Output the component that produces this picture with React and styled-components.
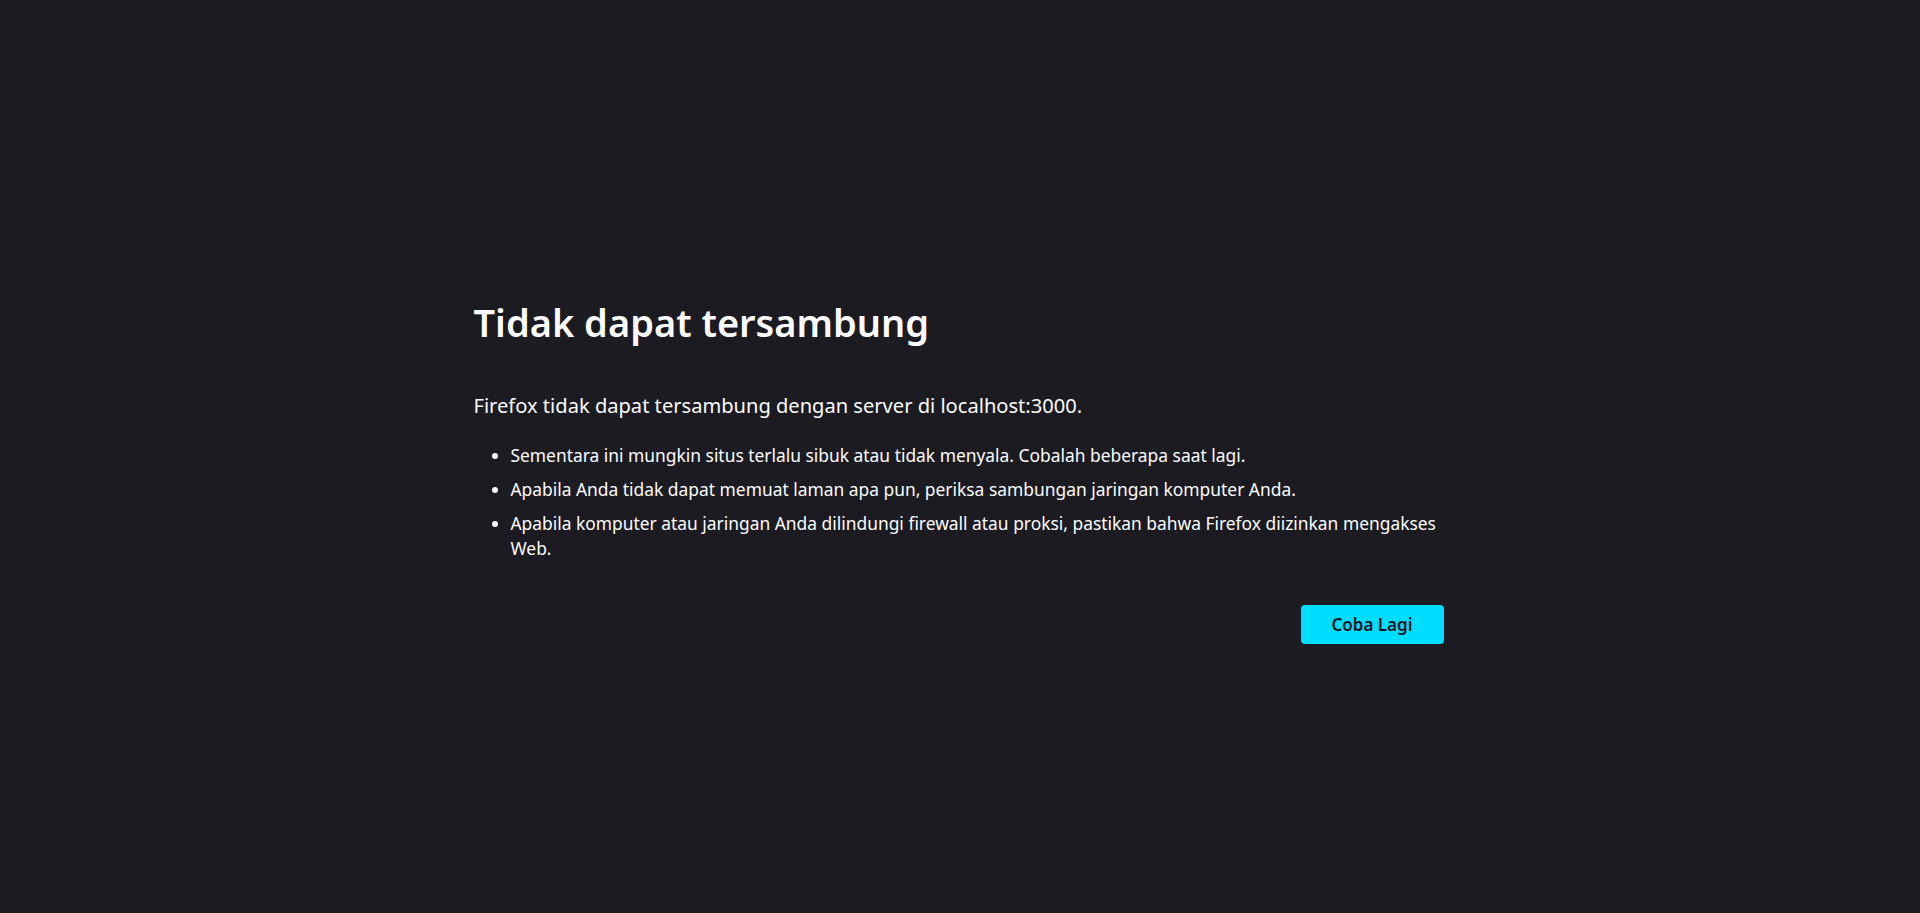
import React from 'react';
import styled, { createGlobalStyle } from 'styled-components';

const GlobalStyle = createGlobalStyle`
  html, body {
    margin: 0;
    padding: 0;
    background: #1c1b22;
  }
  body {
    font-family: 'Segoe UI', 'Noto Sans', sans-serif;
    color: #fbfbfe;
  }
`;

const Page = styled.main`
  box-sizing: border-box;
  min-height: 100vh;
  padding: 27px 3px 0 0;
  display: flex;
  align-items: center;
  justify-content: center;
`;

const Container = styled.div`
  width: 970px;
  display: flex;
  flex-direction: column;
`;

const Title = styled.h1`
  margin: 0;
  font-size: 38px;
  line-height: 50px;
  font-weight: 600;
`;

const Intro = styled.p`
  margin: 44px 0 0;
  font-size: 20.1px;
  line-height: 30px;
  font-weight: 400;
`;

const List = styled.ul`
  margin: 22px 0 0;
  padding-left: 37px;
`;

const Item = styled.li`
  font-size: 17.4px;
  line-height: 25px;
  & + & {
    margin-top: 9px;
  }
`;

const ButtonRow = styled.div`
  margin-top: 44px;
  display: flex;
  justify-content: flex-end;
`;

const RetryButton = styled.button`
  width: 143px;
  height: 39px;
  border: none;
  border-radius: 4px;
  background: #00ddff;
  color: #15141a;
  font-family: inherit;
  font-size: 17px;
  font-weight: 600;
  cursor: pointer;
`;

export default function App() {
  return (
    <>
      <GlobalStyle />
      <Page>
        <Container>
          <Title>Tidak dapat tersambung</Title>
          <Intro>Firefox tidak dapat tersambung dengan server di localhost:3000.</Intro>
          <List>
            <Item>Sementara ini mungkin situs terlalu sibuk atau tidak menyala. Cobalah beberapa saat lagi.</Item>
            <Item>Apabila Anda tidak dapat memuat laman apa pun, periksa sambungan jaringan komputer Anda.</Item>
            <Item>Apabila komputer atau jaringan Anda dilindungi firewall atau proksi, pastikan bahwa Firefox diizinkan mengakses Web.</Item>
          </List>
          <ButtonRow>
            <RetryButton>Coba Lagi</RetryButton>
          </ButtonRow>
        </Container>
      </Page>
    </>
  );
}
